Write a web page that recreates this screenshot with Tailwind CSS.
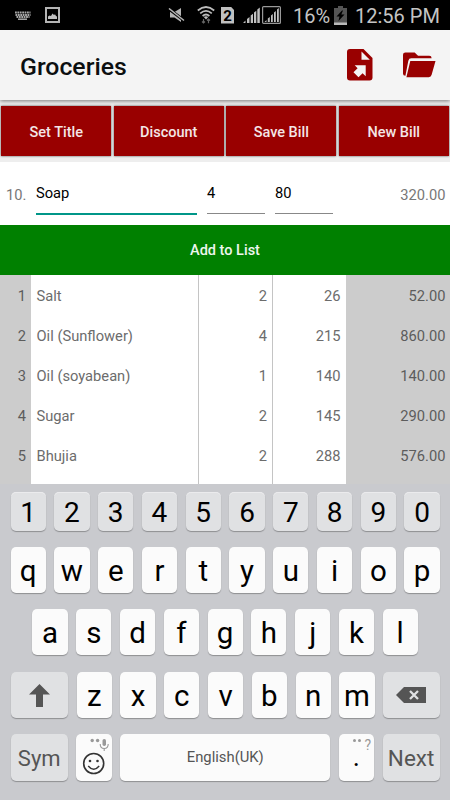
<!DOCTYPE html>
<html lang="en">
<head>
<meta charset="utf-8">
<title>Groceries</title>
<script src="https://cdn.jsdelivr.net/npm/@tailwindcss/browser@4"></script>
</head>
<body class="w-[450px] h-[800px] overflow-hidden bg-white font-['Roboto',sans-serif] flex flex-col">

<!-- Status bar -->
<div class="h-[30px] shrink-0 bg-black flex items-center text-[#c4c4c4] [&>*]:shrink-0">
  <svg class="ml-[15px] w-[16px] h-[9px]" viewBox="0 0 16 9" fill="none" stroke="#a8a8a8"><path d="M0 1.500h15.500M.5 4h15M1.500 6h13" stroke-width="1.800" stroke-dasharray="1.800 .6"/><path d="M3 8.200h9" stroke-width="1.500"/></svg>
  <svg class="ml-[14px] w-[15px] h-[16px]" viewBox="0 0 15 16"><rect x="1" y="1" width="13" height="14" fill="none" stroke="#b4b4b4" stroke-width="2"/><path d="M3 12V9.500l1.500-1 1.500.5 1.500-2.500L9 8l1-.8 1 1.800 1 .5V12z" fill="#c0c0c0"/></svg>
  <svg class="ml-[108px] w-[17px] h-[14px]" viewBox="0 0 17 14"><path d="M2 4h4.500L13 0v14L6.500 9.500H2z" fill="#b4b4b4"/><path d="M1 1l14.500 11" stroke="#000" stroke-width="3"/><path d="M1 .5L16 12.500" stroke="#b4b4b4" stroke-width="1.500"/></svg>
  <svg class="ml-[12px] w-[18px] h-[18px]" viewBox="0 0 18 18"><g fill="none" stroke="#bdbdbd" stroke-width="1.700"><path d="M.8 4.500Q9-2.500 17.200 4.500M3.200 7.300Q9 2.300 14.800 7.300M5.600 10Q9 7 12.400 10"/></g><path d="M9 13.500L6.800 11Q9 9.400 11.200 11z" fill="#bdbdbd"/><path d="M6.500 13v4M5 15.500l1.500 1.500L8 15.500M11.500 17.200v-4M10 14.500l1.500-1.500 1.500 1.500" fill="none" stroke="#666" stroke-width="1.200"/></svg>
  <div class="ml-[6px] w-[13px] h-[17px] bg-[#c0c0c0] text-black text-[15px] font-bold leading-[18px] text-center [clip-path:polygon(0_0,75%_0,100%_20%,100%_100%,0_100%)]">2</div>
  <svg class="ml-[9px] w-[17px] h-[16px]" viewBox="0 0 17 16" fill="#c0c0c0"><path d="M0 16l2.500-2.500V16zM4 12l2.500-2V16H4zM7.700 8.500l2.300-1.700V16H7.700zM11 5.500l2.300-1.700V16H11zM14.300 2.500l2.500-2V16h-2.500z"/></svg>
  <svg class="ml-[2px] w-[19px] h-[18px]" viewBox="0 0 19 18"><rect x=".6" y=".6" width="17.800" height="16.800" rx="1" fill="none" stroke="#999" stroke-width="1.200"/><path d="M2.500 16l2-2v2zM5.800 12.500l2-1.600V16h-2zM9 9.500l1.800-1.500V16H9zM12 6.500l1.800-1.500V16H12zM15 3.500l1.800-1.500V16H15z" fill="#c0c0c0"/></svg>
  <div class="ml-[12px] w-[38px] text-[20px] leading-[30px] pt-px whitespace-nowrap">16%</div>
  <svg class="ml-[3px] w-[13px] h-[19px]" viewBox="0 0 13 19"><path d="M4 0h5v2h4v17H0V2h4z" fill="#555"/><path d="M0 16.500h13V19H0z" fill="#bbb"/><path d="M8 4.500L2.500 10.500h3L4.500 15 10.500 8.500h-3.200L9 4.500z" fill="#000"/></svg>
  <div class="ml-[8px] text-[20px] leading-[30px] pt-px whitespace-nowrap">12:56 PM</div>
</div>

<!-- App bar -->
<header class="h-[70px] shrink-0 bg-[#f4f4f4] flex items-center pl-5 relative shadow-[0_1px_4px_rgba(0,0,0,0.5)]">
  <h1 class="text-[24.800px] font-medium text-[#0c0f10] leading-[30px] mt-[3px]">Groceries</h1>
  <svg class="absolute left-[347px] top-[19px] w-[26px] h-[32px]" viewBox="0 0 26 32"><path d="M3 0h13.500L25.500 9v19.500Q25.500 31.500 22.500 31.500H3Q0 31.500 0 28.500V3Q0 0 3 0z" fill="#900"/><path d="M14.500 2.500l8.300 8.300h-8.300z" fill="#f4f4f4"/><path d="M7.700 16.200H18.700V27.200L15.600 24.200 11.500 28.200 6.500 23.200 10.600 19.200z" fill="#f4f4f4"/></svg>
  <svg class="absolute left-[403px] top-[22px] w-[33px] h-[26px]" viewBox="0 0 34 26"><path d="M2.500 0h9.500l3.500 3.500h11.500Q29.500 3.500 29.500 6H8.500Q6 6 5.500 8.500L2.500 24Q0 24 0 22V2.500Q0 0 2.500 0z" fill="#900"/><path d="M7.500 9H33.500l-4 14Q29 25.500 26.500 25.500H3.500z" fill="#900"/></svg>
</header>

<!-- Actions -->
<nav class="h-[62px] shrink-0 bg-[#eee] flex gap-[2.600px] px-[1.300px] pt-[6px] text-[14.500px] font-medium text-[#f4e6e6] text-center leading-[53px] [&>button]:flex-1 [&>button]:h-[50px] [&>button]:bg-[#900] [&>button]:shadow-[0_0_2px_rgba(0,0,0,0.7)]">
  <button>Set Title</button><button>Discount</button><button>Save Bill</button><button>New Bill</button>
</nav>

<!-- Current entry -->
<div class="h-[63px] shrink-0 flex text-[14.700px] leading-[20px] text-black pt-[21px]">
  <div class="w-[26.500px] mr-[9.500px] text-right text-[#777] pt-[2px]">10.</div>
  <div class="w-[161px] mr-[10px] h-[32px] border-b-2 border-[#009688]">Soap</div>
  <div class="w-[58px] mr-[10px] h-[31px] border-b border-[#888]">4</div>
  <div class="w-[58px] h-[31px] border-b border-[#888]">80</div>
  <div class="flex-1 pr-[4.500px] text-right text-[#777] pt-[2px]">320.00</div>
</div>
<button class="h-[50px] shrink-0 bg-[#008000] text-[#eef6ee] text-[14.500px] font-medium text-center leading-[52px]">Add to List</button>

<!-- Items -->
<main class="h-[209px] shrink-0 overflow-hidden grid grid-cols-[31px_168px_74px_73px_104px] text-[14.700px] leading-[40px] text-[#6c6c6c] [&>div]:h-[209px] [&>div]:pt-px">
  <div class="bg-[#ccc] text-[#5c5c5c] text-right pr-[5px]"><p>1</p><p>2</p><p>3</p><p>4</p><p>5</p></div>
  <div class="border-r border-[#c4c4c4] pl-[5.500px]"><p>Salt</p><p>Oil (Sunflower)</p><p>Oil (soyabean)</p><p>Sugar</p><p>Bhujia</p></div>
  <div class="border-r border-[#c4c4c4] text-right pr-[5px]"><p>2</p><p>4</p><p>1</p><p>2</p><p>2</p></div>
  <div class="text-right pr-[5.500px]"><p>26</p><p>215</p><p>140</p><p>145</p><p>288</p></div>
  <div class="bg-[#ccc] text-[#5c5c5c] text-right pr-[4.500px]"><p>52.00</p><p>860.00</p><p>140.00</p><p>290.00</p><p>576.00</p></div>
</main>

<!-- Keyboard -->
<section class="h-[316px] shrink-0 bg-[#c9cace] pl-[10.600px] pr-[10.400px] pt-[8px] flex flex-col text-black text-center">
  <div class="flex gap-[8.600px] mb-[16px] text-[28px] leading-[42px] [&>div]:flex-1 [&>div]:h-[39px] [&>div]:rounded-[5px] [&>div]:bg-[#e0e1e3] [&>div]:shadow-[0_1px_1px_#8e8f92,inset_0_1px_0_#ebebed]">
    <div>1</div><div>2</div><div>3</div><div>4</div><div>5</div><div>6</div><div>7</div><div>8</div><div>9</div><div>0</div>
  </div>
  <div class="flex gap-[8.600px] mb-[16px] text-[29.500px] leading-[49px] [&>div]:flex-1 [&>div]:h-[46px] [&>div]:rounded-[5px] [&>div]:bg-[#fbfbfb] [&>div]:shadow-[0_1px_1px_#8e8f92]">
    <div>q</div><div>w</div><div>e</div><div>r</div><div>t</div><div>y</div><div>u</div><div>i</div><div>o</div><div>p</div>
  </div>
  <div class="flex gap-[8.600px] mb-[17px] mx-[21.900px] text-[29.500px] leading-[49px] [&>div]:flex-1 [&>div]:h-[46px] [&>div]:rounded-[5px] [&>div]:bg-[#fbfbfb] [&>div]:shadow-[0_1px_1px_#8e8f92]">
    <div>a</div><div>s</div><div>d</div><div>f</div><div>g</div><div>h</div><div>j</div><div>k</div><div>l</div>
  </div>
  <div class="flex gap-[8.600px] mb-[16px] text-[29.500px] leading-[48px] [&>div]:h-[46px] [&>div]:rounded-[5px] [&>div]:shadow-[0_1px_1px_#8e8f92]">
    <div class="w-[57.500px] shrink-0 bg-[#e0e1e3] flex items-center justify-center"><svg class="w-[21px] h-[23px]" viewBox="0 0 21 23"><path d="M10.500 0L21 10.500h-7V23H7V10.500H0z" fill="#555"/></svg></div>
    <div class="flex-1 bg-[#fbfbfb]">z</div><div class="flex-1 bg-[#fbfbfb]">x</div><div class="flex-1 bg-[#fbfbfb]">c</div><div class="flex-1 bg-[#fbfbfb]">v</div><div class="flex-1 bg-[#fbfbfb]">b</div><div class="flex-1 bg-[#fbfbfb]">n</div><div class="flex-1 bg-[#fbfbfb]">m</div>
    <div class="w-[56.500px] shrink-0 bg-[#e0e1e3] flex items-center justify-center"><svg class="w-[30px] h-[16px]" viewBox="0 0 30 16"><path d="M8 0h22v16H8L0 8z" fill="#555"/><path d="M14 4l8 8M22 4l-8 8" stroke="#e0e1e3" stroke-width="2.300"/></svg></div>
  </div>
  <div class="flex gap-[8.600px] [&>div]:h-[46.500px] [&>div]:rounded-[5px] [&>div]:shadow-[0_1px_1px_#8e8f92]">
    <div class="w-[57.300px] shrink-0 bg-[#e0e1e3] text-[#555] text-[22px] leading-[49px]">Sym</div>
    <div class="w-[35.200px] shrink-0 bg-[#fbfbfb]"><svg class="w-[35px] h-[46px]" viewBox="0 0 35 46" fill="none"><circle cx="17.700" cy="29.500" r="10" stroke="#333" stroke-width="1.600"/><circle cx="14" cy="27" r="1.300" fill="#333"/><circle cx="21.500" cy="27" r="1.300" fill="#333"/><path d="M12.200 32q5.500 6.500 11 0" stroke="#333" stroke-width="1.400"/><circle cx="16.200" cy="6.500" r="1.700" fill="#999"/><circle cx="21.600" cy="6.500" r="1.700" fill="#999"/><rect x="26.500" y="5" width="3.500" height="7" rx="1.700" fill="#999"/><path d="M24.200 10q0 4.500 4 4.500t4-4.500M28.200 14.500v2.500" stroke="#999" stroke-width="1.100"/></svg></div>
    <div class="flex-1 bg-[#fbfbfb] text-[#555] text-[14.800px] leading-[46px]">English(UK)</div>
    <div class="w-[35.200px] shrink-0 bg-[#fbfbfb] relative text-[27px] leading-[47px]">.
      <span class="absolute right-[3px] top-[3px] text-[14px] leading-[16px] text-[#999] flex gap-[2px]"><i class="mt-[2px] w-[3.400px] h-[3.400px] rounded-full bg-[#999]"></i><i class="mt-[2px] mr-[1px] w-[3.400px] h-[3.400px] rounded-full bg-[#999]"></i>?</span>
    </div>
    <div class="w-[57px] shrink-0 bg-[#e0e1e3] text-[#555] text-[22.500px] leading-[49px]">Next</div>
  </div>
</section>
</body>
</html>
